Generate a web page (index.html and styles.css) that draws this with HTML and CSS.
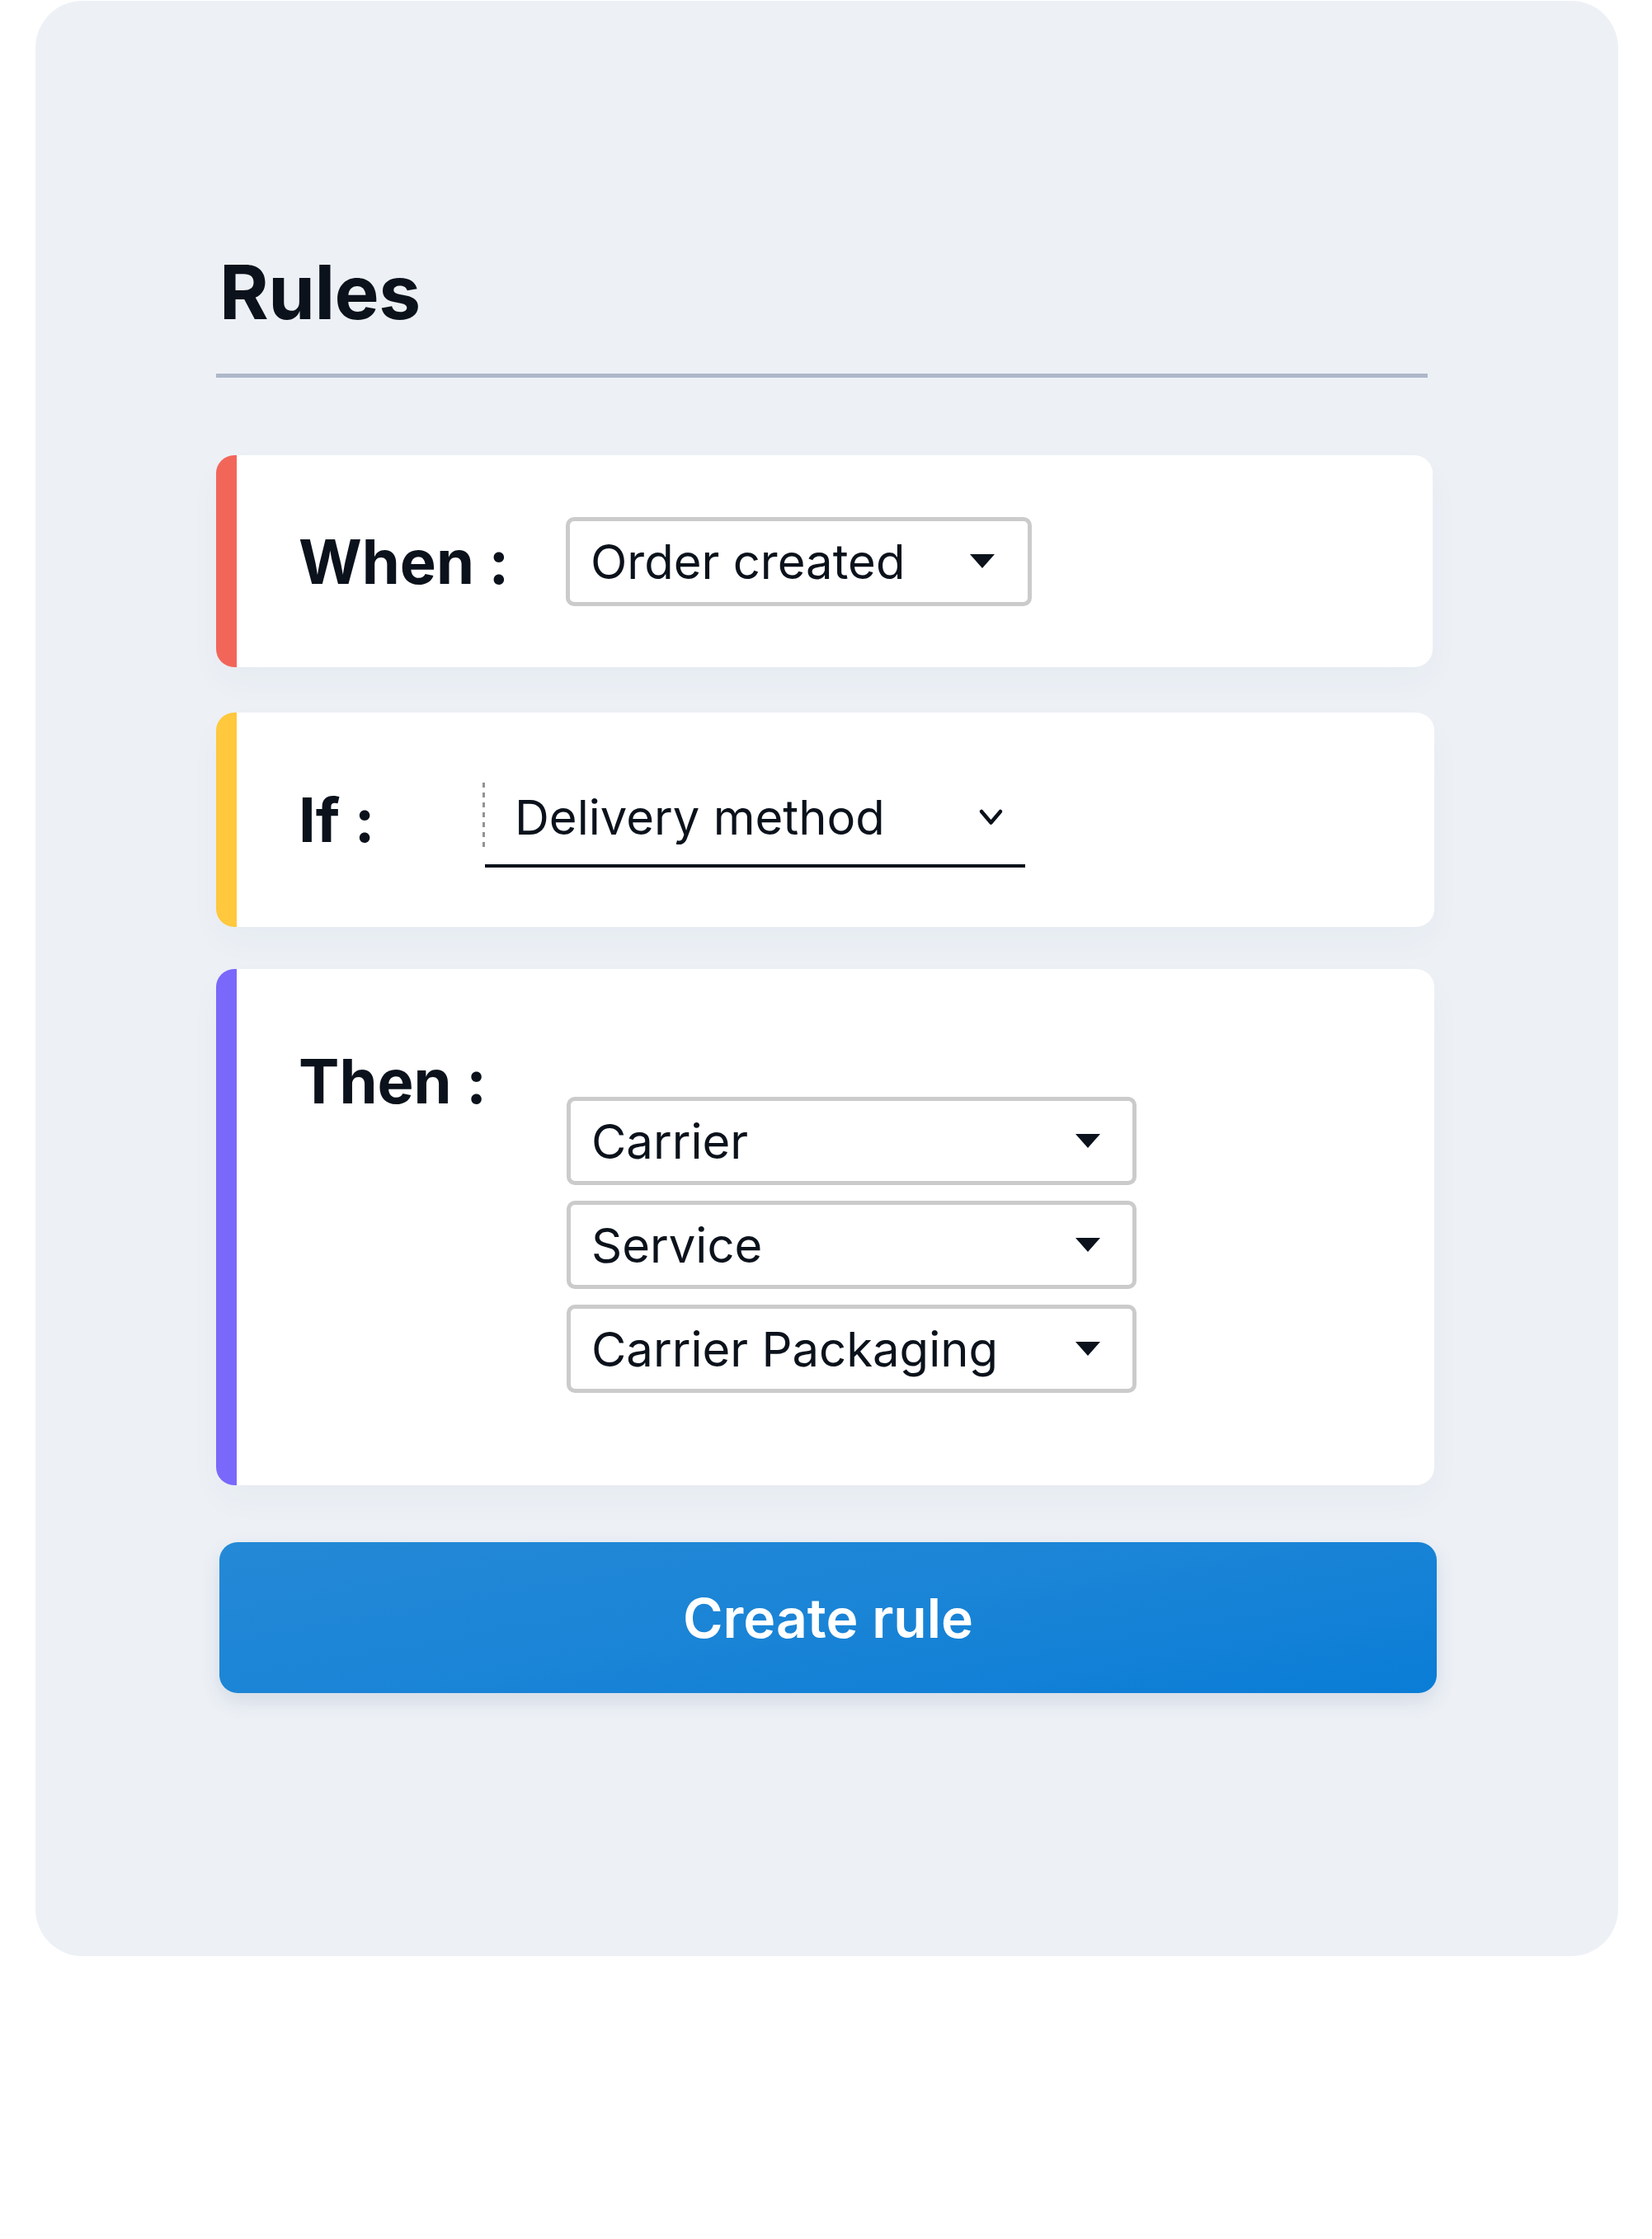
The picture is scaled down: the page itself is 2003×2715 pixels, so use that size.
FILE: index.html
```html
<!DOCTYPE html>
<html lang="en">
<head>
<meta charset="utf-8">
<title>Rules</title>
<link rel="stylesheet" href="styles.css">
</head>
<body>
<div class="panel">
  <h1 class="title">Rules</h1>
  <div class="divider"></div>

  <div class="card card-when">
    <div class="label">When :</div>
    <div class="select select-short">
      <span class="select-text">Order created</span>
      <svg class="caret" width="30" height="17" viewBox="0 0 30 17"><polygon points="0,0 30,0 15,17" fill="#0b121b"/></svg>
    </div>
  </div>

  <div class="card card-if">
    <div class="label label-if">If :</div>
    <div class="if-control">
      <span class="dash"></span>
      <div class="underlined">
        <span class="select-text">Delivery method</span>
        <svg class="chevron" width="31" height="24" viewBox="0 0 31 24"><path d="M4 5 L15.5 18.5 L27 5" fill="none" stroke="#0b121b" stroke-width="4.5" stroke-linecap="round" stroke-linejoin="round"/></svg>
      </div>
    </div>
  </div>

  <div class="card card-then">
    <div class="label label-then">Then :</div>
    <div class="select-stack">
      <div class="select select-long">
        <span class="select-text">Carrier</span>
        <svg class="caret" width="30" height="17" viewBox="0 0 30 17"><polygon points="0,0 30,0 15,17" fill="#0b121b"/></svg>
      </div>
      <div class="select select-long">
        <span class="select-text">Service</span>
        <svg class="caret" width="30" height="17" viewBox="0 0 30 17"><polygon points="0,0 30,0 15,17" fill="#0b121b"/></svg>
      </div>
      <div class="select select-long">
        <span class="select-text">Carrier Packaging</span>
        <svg class="caret" width="30" height="17" viewBox="0 0 30 17"><polygon points="0,0 30,0 15,17" fill="#0b121b"/></svg>
      </div>
    </div>
  </div>

  <button class="create">Create rule</button>
</div>
</body>
</html>
```

FILE: styles.css
```css
html, body {
  margin: 0;
  padding: 0;
  background: #ffffff;
}

body {
  font-family: Inter, "Noto Sans", "Liberation Sans", sans-serif;
  color: #0b121b;
}

.panel {
  box-sizing: border-box;
  width: 1919px;
  margin: 1px 0 0 43px;
  padding: 298px 222px 319px 219px;
  background: #edf1f6;
  border-radius: 57px;
  display: flex;
  flex-direction: column;
  align-items: flex-start;
}

.title {
  margin: 0;
  padding-left: 4px;
  font-size: 91px;
  line-height: 110px;
  font-weight: 700;
  letter-spacing: -0.5px;
  color: #0b121b;
}

.divider {
  margin-top: 44px;
  width: 1469px;
  height: 5px;
  background: #adb8c9;
}

.card {
  box-sizing: border-box;
  width: 1477px;
  background: #ffffff;
  border-left: 25px solid #f2665a;
  border-radius: 22px;
  display: flex;
  padding-left: 75px;
  box-shadow: 0 18px 40px rgba(40, 60, 100, 0.03);
}

.card-when {
  margin-top: 94px;
  height: 257px;
  align-items: center;
  width: 1475px;
}

.card-if {
  margin-top: 55px;
  height: 260px;
  align-items: center;
  border-left-color: #ffc83d;
}

.card-then {
  margin-top: 51px;
  height: 626px;
  align-items: flex-start;
  padding-top: 91px;
  border-left-color: #7a68fb;
}

.label {
  width: 324px;
  flex: none;
  font-size: 74px;
  line-height: 90px;
  font-weight: 700;
  color: #0b121b;
}

.label-if {
  width: 223px;
}

.label-then {
  width: 325px;
}

.select {
  box-sizing: border-box;
  height: 108px;
  border: 5px solid #cbcbcb;
  border-radius: 10px;
  background: #ffffff;
  display: flex;
  align-items: center;
  justify-content: space-between;
  padding: 0 40px 0 25px;
}

.select-short {
  width: 565px;
}

.select-long {
  width: 691px;
  height: 107px;
  padding-right: 39px;
}

.select-text {
  font-size: 58px;
  line-height: 70px;
  font-weight: 400;
  color: #0b121b;
  white-space: nowrap;
}

.caret {
  display: block;
  flex: none;
}

.select-stack {
  margin-top: 64px;
  display: flex;
  flex-direction: column;
  gap: 19px;
}

.if-control {
  display: flex;
  align-items: flex-start;
  margin-top: 13px;
}

.dash {
  display: block;
  width: 3px;
  height: 84px;
  background: repeating-linear-gradient(to bottom, #939393 0 6px, transparent 6px 12px);
}

.underlined {
  box-sizing: border-box;
  width: 655px;
  height: 103px;
  border-bottom: 4px solid #0b121b;
  padding: 0 26px 15px 36px;
  display: flex;
  align-items: center;
  justify-content: space-between;
}

.chevron {
  display: block;
  flex: none;
}

.create {
  margin: 69px 0 0 4px;
  width: 1476px;
  height: 183px;
  border: none;
  border-radius: 22px;
  background: linear-gradient(170deg, #2489d6 0%, #1a84d6 50%, #0a7dd6 100%);
  color: #ffffff;
  font-family: Inter, "Noto Sans", "Liberation Sans", sans-serif;
  font-size: 66px;
  font-weight: 600;
  box-shadow: 0 10px 24px rgba(30, 60, 110, 0.12);
  cursor: pointer;
}
```
